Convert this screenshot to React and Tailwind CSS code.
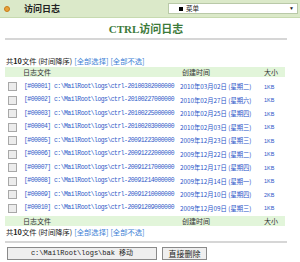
const rows = [
  ["00001", "20100302000000", "2010年03月02日", "星期二", "1KB"],
  ["00002", "20100227000000", "2010年02月27日", "星期六", "1KB"],
  ["00003", "20100225000000", "2010年02月25日", "星期四", "1KB"],
  ["00004", "20100203000000", "2010年02月03日", "星期三", "1KB"],
  ["00005", "20091223000000", "2009年12月23日", "星期三", "1KB"],
  ["00006", "20091222000000", "2009年12月22日", "星期二", "1KB"],
  ["00007", "20091217000000", "2009年12月17日", "星期四", "1KB"],
  ["00008", "20091214000000", "2009年12月14日", "星期一", "1KB"],
  ["00009", "20091210000000", "2009年12月10日", "星期四", "2KB"],
  ["00010", "20091209000000", "2009年12月09日", "星期三", "1KB"],
];

const cjk = "font-['Noto_Sans_CJK_SC',sans-serif]";

function CountLine() {
  return (
    <div className={`pl-[6px] h-[12px] flex items-center text-[7.3px] text-[#222] ${cjk}`}>
      <span>共<b>10</b>文件 (时间降序)</span>
      <span className="ml-[2px] text-[#3d7fd6]">[全部选择]</span>
      <span className="ml-[2px] text-[#3d7fd6]">[全部不选]</span>
    </div>
  );
}

function HeadRow() {
  return (
    <div className={`mx-[5px] w-[280px] h-[10px] bg-[#e2f5da] flex items-center text-[7px] text-[#333] ${cjk}`}>
      <span className="ml-[18px] w-[159px]">日志文件</span>
      <span className="w-[82px]">创建时间</span>
      <span>大小</span>
    </div>
  );
}

export default function App() {
  return (
    <div className="w-[300px] h-[262px] bg-white overflow-hidden">
      <div className="h-[18px] bg-[#dbe9c9] border-b border-[#c7dab0] flex items-center">
        <span className="ml-[4px] w-[6px] h-[6px] rounded-full bg-[#e8a23a] border border-[#c77d1a]" />
        <span className={`ml-[14px] text-[9px] font-bold text-[#222] ${cjk}`}>访问日志</span>
        <div className="ml-auto mr-[2px] w-[130px] h-[11px] bg-white border border-[#b9c9a8] flex items-center text-[6.5px] text-[#222]">
          <span className="ml-[10px] w-[4px] h-[4px] bg-black" />
          <span className={`ml-[3px] ${cjk}`}>菜单</span>
          <span className="ml-auto mr-[3px] text-[5px]">▼</span>
        </div>
      </div>
      <div className="h-[20px] flex items-center justify-center pr-[8px] pt-[2px]">
        <span className="text-[11px] font-bold text-[#3d7a3a] font-['Liberation_Serif','Noto_Sans_CJK_SC',serif]">CTRL访问日志</span>
      </div>
      <div className="mx-[5px] w-[282px] h-[2px] bg-[#d6d6d6]" />
      <div className="h-[15px]" />
      <CountLine />
      <HeadRow />
      <div className="mt-[3px]">
        {rows.map((r) => (
          <div key={r[0]} className="mx-[5px] w-[280px] h-[13.5px] flex items-center">
            <span className="ml-[3px] w-[9px] h-[9px] border border-[#a8a8a8] bg-[#ececec]" />
            <span className="ml-[7px] w-[156px] text-[6.4px] tracking-[-0.5px] text-[#2f5bc9] font-['Liberation_Mono',monospace] whitespace-nowrap overflow-hidden">
              [#{r[0]}] c:\MailRoot\logs\ctrl-{r[1]}
            </span>
            <span className={`w-[84px] text-[6.3px] text-[#2a55c8] whitespace-nowrap overflow-hidden ${cjk}`}>
              {r[2]} ({r[3]})
            </span>
            <span className="text-[5.5px] text-[#2a55c8] font-['Liberation_Sans',sans-serif]">{r[4]}</span>
          </div>
        ))}
      </div>
      <div className="mt-[1px]">
        <HeadRow />
      </div>
      <CountLine />
      <div className="mx-[5px] w-[282px] h-[2px] bg-[#d6d6d6] mt-[3px]" />
      <div className="flex items-center mt-[4px] ml-[7px] gap-[5px]">
        <button className="w-[150px] h-[13px] bg-[#efefef] border border-[#8a8a8a] text-[7px] text-[#222] font-['Liberation_Mono','Noto_Sans_CJK_SC',monospace]">
          c:\MailRoot\logs\bak 移动
        </button>
        <button className={`w-[45px] h-[13px] bg-[#efefef] border border-[#8a8a8a] text-[8px] text-[#222] ${cjk}`}>
          直接删除
        </button>
      </div>
    </div>
  );
}
